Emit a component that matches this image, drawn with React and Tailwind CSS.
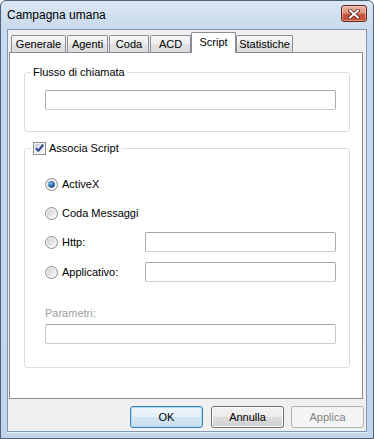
import React from "react";

function CloseButton() {
  return (
    <div className="mt-[4px] w-[26px] h-[17px] rounded-[3px] border border-[#6a2418] bg-[linear-gradient(to_bottom,#eab3a6_0%,#e09584_45%,#c75a43_55%,#c24b33_100%)] flex items-center justify-center shadow-[inset_0_0_0_1px_rgba(255,220,210,0.5)]">
      <svg width="12" height="10" viewBox="0 0 12 10">
        <path d="M2 1.5 L10 8.5 M10 1.5 L2 8.5" stroke="#5a1a10" strokeWidth="3.6" strokeLinecap="square" />
        <path d="M2 1.5 L10 8.5 M10 1.5 L2 8.5" stroke="#ffffff" strokeWidth="2" strokeLinecap="square" />
      </svg>
    </div>
  );
}

function Radio({ checked }) {
  return (
    <svg width="13" height="13" viewBox="0 0 13 13" className="shrink-0">
      <defs>
        <linearGradient id="rg" x1="0" y1="0" x2="1" y2="1">
          <stop offset="0" stopColor="#cfcfcf" />
          <stop offset="1" stopColor="#fbfbfb" />
        </linearGradient>
        <radialGradient id="rd" cx="0.4" cy="0.35" r="0.7">
          <stop offset="0" stopColor="#9fd3f5" />
          <stop offset="0.45" stopColor="#2a7cc0" />
          <stop offset="1" stopColor="#0b3a66" />
        </radialGradient>
      </defs>
      <circle cx="6.5" cy="6.5" r="6" fill="#f6f6f6" stroke="#8a8a8a" strokeWidth="1" />
      <circle cx="6.5" cy="6.5" r="4.5" fill="url(#rg)" />
      {checked && <circle cx="6.5" cy="6.5" r="3.2" fill="url(#rd)" />}
    </svg>
  );
}

function Checkbox() {
  return (
    <svg width="13" height="13" viewBox="0 0 13 13" className="shrink-0">
      <defs>
        <linearGradient id="cg" x1="0" y1="0" x2="1" y2="1">
          <stop offset="0" stopColor="#cbcfd5" />
          <stop offset="1" stopColor="#f7f7f7" />
        </linearGradient>
      </defs>
      <rect x="0.5" y="0.5" width="12" height="12" fill="#f4f4f4" stroke="#8e8f8f" />
      <rect x="2" y="2" width="9" height="9" fill="url(#cg)" />
      <path d="M3 6.2 L5.3 8.8 L10.2 2.6" stroke="#2a3f8c" strokeWidth="1.9" fill="none" strokeLinejoin="round" />
    </svg>
  );
}

function Input({ className = "" }) {
  return <div className={"h-[20px] rounded-[2px] border border-[#abadb3] border-t-[#a4a6ad] border-b-[#c9ccd2] bg-white " + className} />;
}

function Tab({ label, w, mr }) {
  return (
    <div className={"h-[17px] border border-b-0 border-[#898c95] rounded-t-[2px] bg-[linear-gradient(to_bottom,#f6f6f6_0%,#eeeeee_50%,#e2e2e2_51%,#dcdcdc_100%)] flex items-center justify-center leading-[13px] pt-[1px] " + w + " " + mr}>
      {label}
    </div>
  );
}

export default function App() {
  return (
    <div className="w-[374px] h-[439px] flex flex-col border border-[#4d6179] rounded-t-[6px] bg-[linear-gradient(to_bottom,#dbe7f3_0px,#c8daed_28px,#c2d5ea_100%)] font-['Liberation_Sans',Arial,sans-serif] text-[11px] text-black overflow-hidden">
      <div className="h-[28px] flex items-start justify-between pl-[6px] pr-[6px] shrink-0">
        <span className="text-[12px] mt-[7px] leading-[14px] text-black">Campagna umana</span>
        <CloseButton />
      </div>
      <div className="mx-[6px] mb-[6px] flex-1 border border-[#8197b1] bg-[#f0f0f0] flex flex-col shadow-[0_1px_0_#e4f1fb]">
        <div className="h-[22px] flex items-end pl-[3px] shrink-0">
          <Tab label="Generale" w="w-[55px]" mr="mr-[1px]" />
          <Tab label="Agenti" w="w-[41px]" mr="mr-[1px]" />
          <Tab label="Coda" w="w-[40px]" mr="mr-[1px]" />
          <Tab label="ACD" w="w-[41px]" mr="mr-0" />
          <div className="relative z-10 -mb-px w-[45px] h-[21px] border border-b-0 border-[#898c95] rounded-t-[2px] bg-white flex items-start justify-center leading-[13px] pt-[3px]">
            Script
          </div>
          <Tab label="Statistiche" w="w-[57px]" mr="mr-0" />
        </div>
        <div className="ml-[1px] w-[354px] h-[347px] border border-[#898c95] bg-white shrink-0 flex flex-col">
          <fieldset className="ml-[14px] mt-[13px] w-[326px] border border-[#d5dfe5] rounded-[3px] pb-[21px]">
            <legend className="ml-[6px] px-[2px] leading-[13px]">Flusso di chiamata</legend>
            <Input className="ml-[20px] mt-[11px] w-[291px]" />
          </fieldset>
          <fieldset className="ml-[14px] mt-[10px] w-[326px] border border-[#d5dfe5] rounded-[3px] pb-[23px]">
            <legend className="ml-[6px] px-[2px] leading-[13px] h-[13px] flex items-center">
              <Checkbox />
              <span className="ml-[3px]">Associa Script</span>
            </legend>
            <div className="ml-[20px] mt-[19px] h-[20px] flex items-center">
              <Radio checked />
              <span className="ml-[4px]">ActiveX</span>
            </div>
            <div className="ml-[20px] mt-[9px] h-[20px] flex items-center">
              <Radio />
              <span className="ml-[4px]">Coda Messaggi</span>
            </div>
            <div className="ml-[20px] mt-[9px] h-[20px] flex items-center">
              <div className="w-[100px] flex items-center">
                <Radio />
                <span className="ml-[4px]">Http:</span>
              </div>
              <Input className="w-[191px]" />
            </div>
            <div className="ml-[20px] mt-[10px] h-[20px] flex items-center">
              <div className="w-[100px] flex items-center">
                <Radio />
                <span className="ml-[4px]">Applicativo:</span>
              </div>
              <Input className="w-[191px]" />
            </div>
            <div className="ml-[20px] mt-[25px] leading-[13px] h-[13px] text-[#a0a0a0]">Parametri:</div>
            <Input className="ml-[20px] mt-[4px] w-[291px] border-[#c6c8cc]" />
          </fieldset>
        </div>
        <div className="mt-[7px] flex justify-end pr-[2px]">
          <div className="w-[73px] h-[22px] rounded-[3px] border border-[#3c7fb1] bg-[linear-gradient(to_bottom,#eef6fb_0%,#e4eff7_50%,#d3e5f1_51%,#c9def0_100%)] shadow-[inset_0_0_0_1px_#a9dcf6] flex items-center justify-center">
            OK
          </div>
          <div className="ml-[8px] w-[73px] h-[22px] rounded-[3px] border border-[#707070] bg-[linear-gradient(to_bottom,#f2f2f2_0%,#ebebeb_50%,#dddddd_51%,#cfcfcf_100%)] shadow-[inset_0_0_0_1px_#fcfcfc] flex items-center justify-center">
            Annulla
          </div>
          <div className="ml-[7px] w-[73px] h-[22px] rounded-[3px] border border-[#adb2b5] bg-[#f4f4f4] flex items-center justify-center text-[#838383]">
            Applica
          </div>
        </div>
      </div>
    </div>
  );
}
